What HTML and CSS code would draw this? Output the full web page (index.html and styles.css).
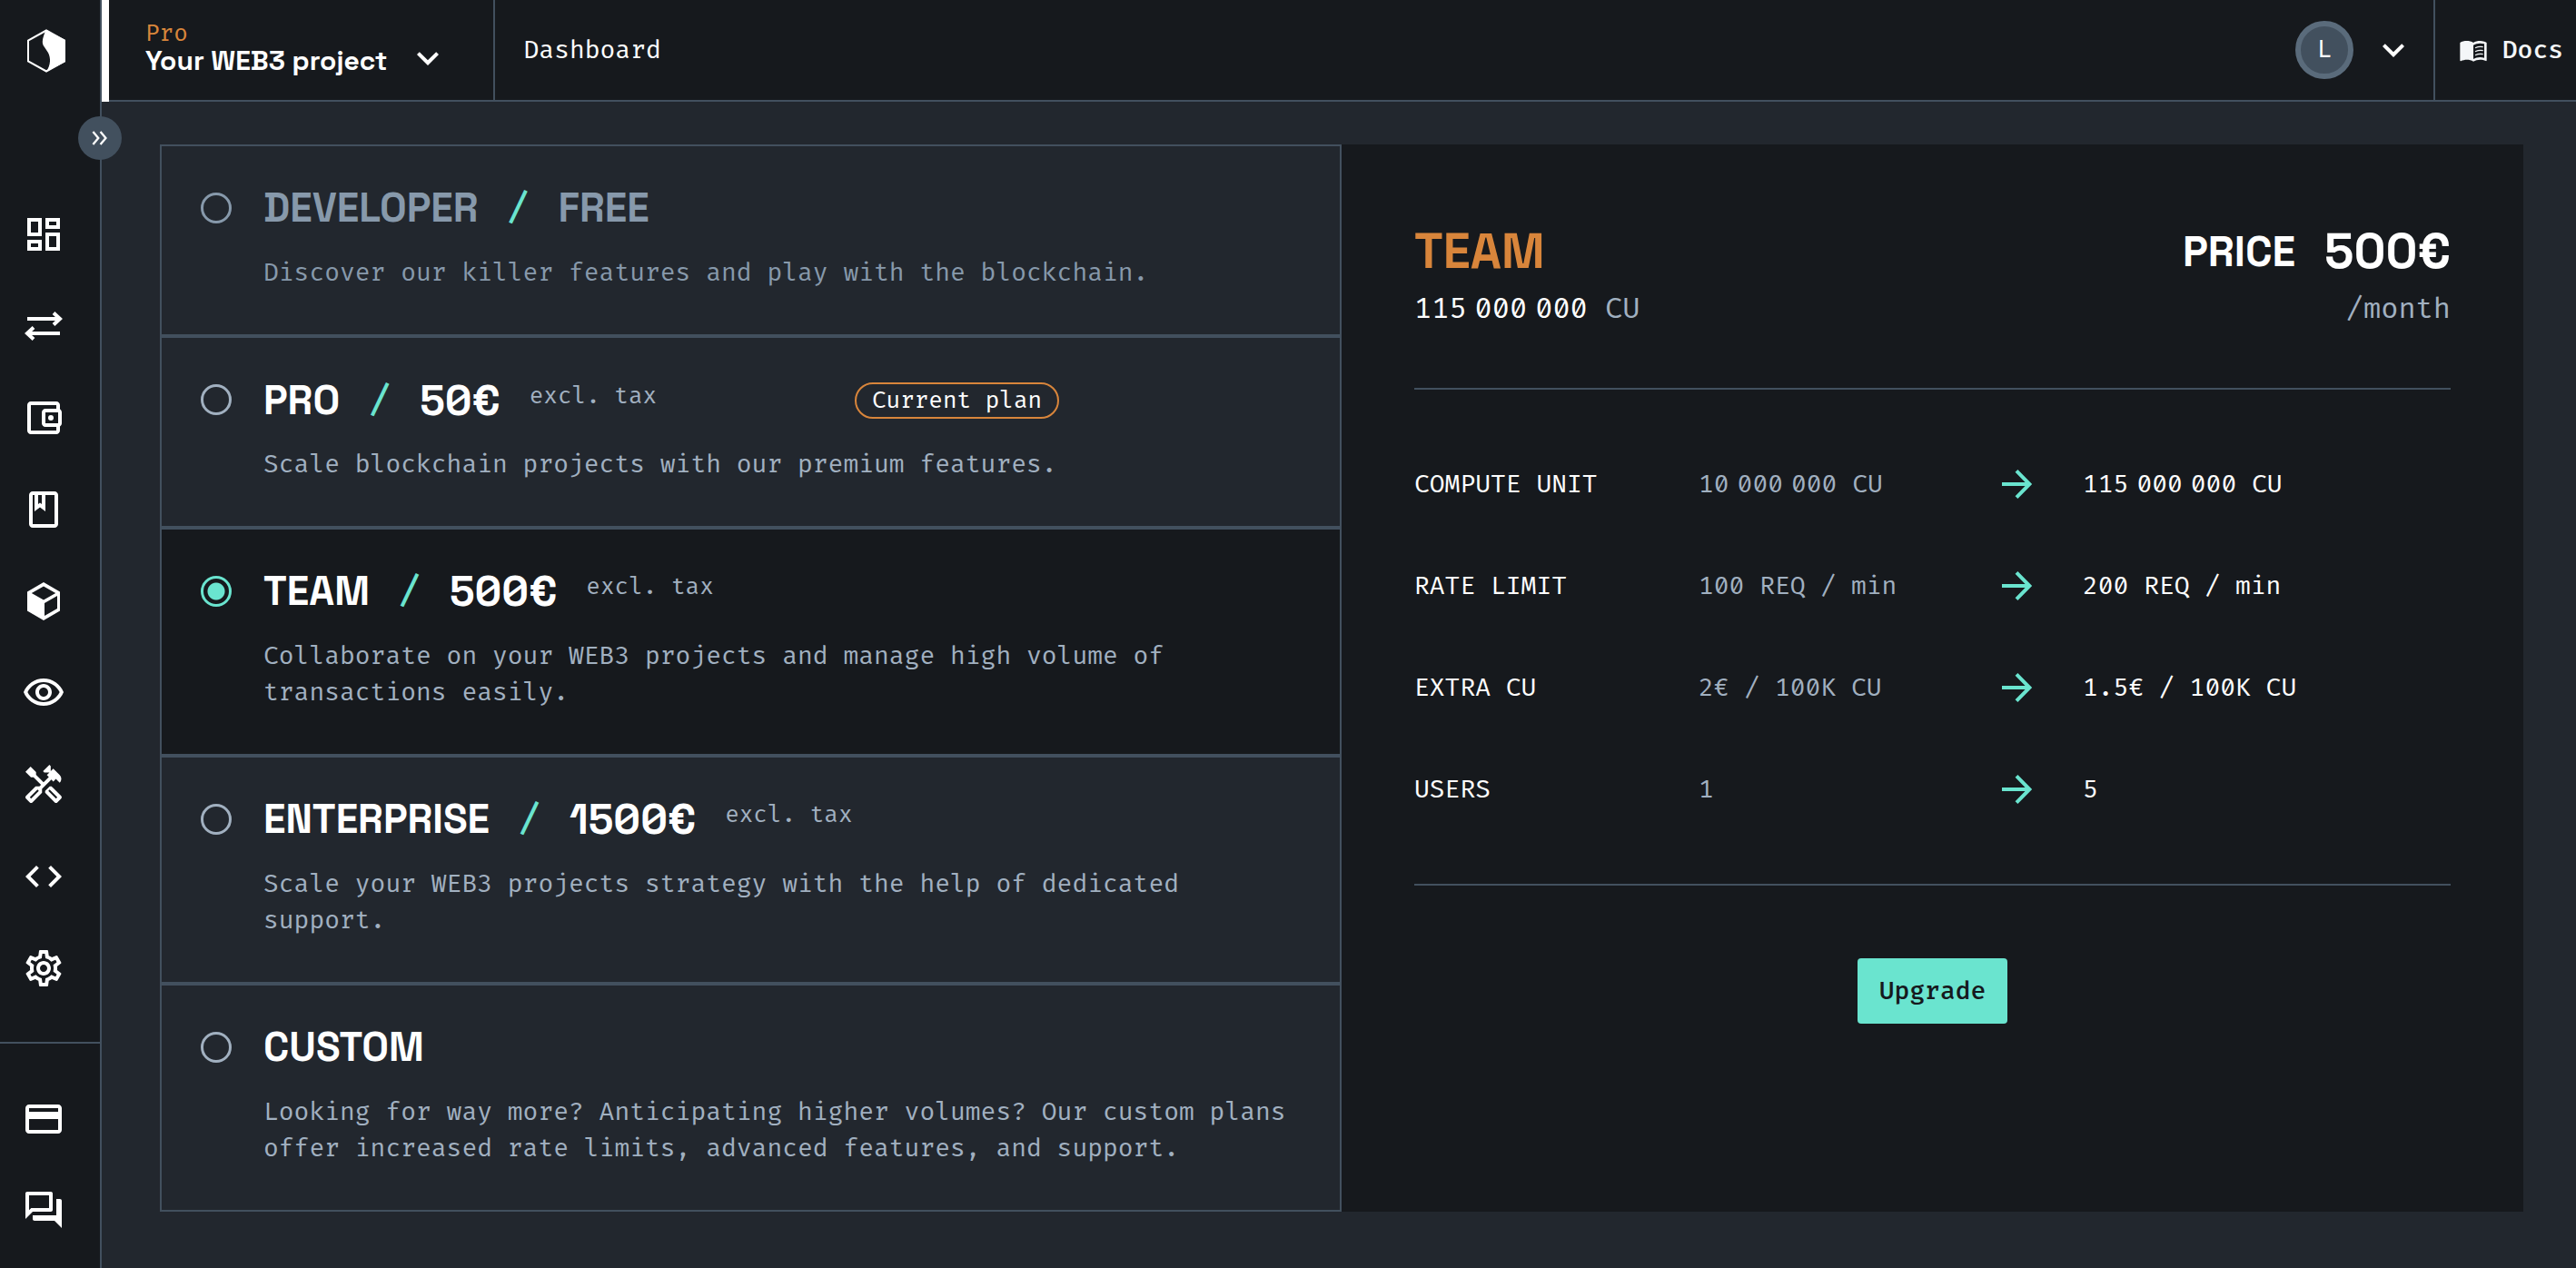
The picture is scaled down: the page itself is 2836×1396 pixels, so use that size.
FILE: index.html
```html
<!DOCTYPE html>
<html lang="en">
<head>
<meta charset="utf-8">
<title>Dashboard</title>
<link rel="stylesheet" href="styles.css">
</head>
<body>
<div class="app">
  <aside class="sidebar">
    <a class="logo" href="#" aria-label="Home">
      <svg viewBox="0 0 44 48"><path d="M22 1.500L2 12.500v23L22 46.500l20-11v-23z" fill="none" stroke="currentColor" stroke-width="2"/><path d="M21 1l22 11v24L22 47c5-8 5-15 2-21-4-7-7-8-6-14 .5-4 3-9 3-11z"/></svg>
    </a>
    <nav class="side-nav" aria-label="Main">
      <a href="#" aria-label="Dashboard"><svg viewBox="0 0 24 24"><path d="M19 5v2h-4V5h4M9 5v6H5V5h4m10 8v6h-4v-6h4M9 17v2H5v-2h4M21 3h-8v6h8V3zM11 3H3v10h8V3zm10 8h-8v10h8V11zm-10 4H3v6h8v-6z"/></svg></a>
      <a href="#" aria-label="Requests"><svg class="line" viewBox="0 0 24 24"><path d="M3 8h18M17.500 4.800L21 8l-3.500 3.200M21 16H3M6.500 12.800L3 16l3.500 3.200"/></svg></a>
      <a href="#" aria-label="Wallet"><svg viewBox="0 0 24 24"><path d="M21 7.280V5c0-1.100-.9-2-2-2H5c-1.110 0-2 .9-2 2v14c0 1.100.89 2 2 2h14c1.100 0 2-.9 2-2v-2.280c.59-.35 1-.98 1-1.720V9c0-.74-.41-1.370-1-1.720zM20 9v6h-7V9h7zM5 19V5h14v2h-6c-1.100 0-2 .9-2 2v6c0 1.100.9 2 2 2h6v2H5z"/><circle cx="16" cy="12" r="1.500"/></svg></a>
      <a href="#" aria-label="Address book"><svg viewBox="0 0 24 24"><path d="M18 2H6c-1.100 0-2 .9-2 2v16c0 1.100.9 2 2 2h12c1.100 0 2-.9 2-2V4c0-1.100-.9-2-2-2zM9 4h2v5l-1-.75L9 9V4zm9 16H6V4h1v9l3-2.250L13 13V4h5v16z"/></svg></a>
      <a href="#" aria-label="Nodes"><svg viewBox="0 0 24 24"><path fill-rule="evenodd" d="M12 1.500l9 5.200v10.600l-9 5.200-9-5.200V6.700zM5.400 7.500L12 11.300l6.600-3.800L12 3.700zM19.500 9l-7 4v7l7-4z"/></svg></a>
      <a href="#" aria-label="Explorer"><svg viewBox="0 0 24 24"><path d="M12 6c3.790 0 7.170 2.130 8.820 5.500C19.170 14.870 15.790 17 12 17s-7.170-2.130-8.820-5.500C4.830 8.130 8.210 6 12 6m0-2C7 4 2.730 7.110 1 11.500 2.730 15.890 7 19 12 19s9.270-3.110 11-7.500C21.270 7.110 17 4 12 4zm0 5c1.380 0 2.500 1.120 2.500 2.500S13.380 14 12 14s-2.500-1.120-2.500-2.500S10.620 9 12 9m0-2c-2.480 0-4.500 2.020-4.500 4.500S9.520 16 12 16s4.500-2.020 4.500-4.500S14.480 7 12 7z"/></svg></a>
      <a href="#" aria-label="Tools"><svg viewBox="0 0 24 24"><path d="m21.670 18.170-5.300-5.300h-.99l-2.540 2.540v.99l5.300 5.300c.39.39 1.020.39 1.410 0l2.120-2.120a.996.996 0 0 0 0-1.410zm-2.830 1.420-4.240-4.240.71-.71 4.240 4.240-.71.71z"/><path d="m17.340 10.190 1.410-1.410 2.120 2.120a3 3 0 0 0 0-4.240l-3.540-3.540-1.410 1.410V1.710L15.220 1l-3.540 3.540.71.71h2.830l-1.410 1.410 1.060 1.060-2.890 2.890-4.130-4.130V5.060L4.830 2.040 2 4.870 5.030 7.900h1.410l4.130 4.130-.85.85H7.600l-5.300 5.300c-.39.39-.39 1.020 0 1.410l2.120 2.120c.39.39 1.020.39 1.410 0l5.300-5.300v-2.120l5.150-5.150 1.060 1.050zm-7.980 5.150-4.240 4.240-.71-.71 4.240-4.240.71.71z"/></svg></a>
      <a href="#" aria-label="Code"><svg viewBox="0 0 24 24"><path d="M9.400 16.600 4.800 12l4.600-4.600L8 6l-6 6 6 6 1.400-1.400zm5.200 0 4.600-4.600-4.600-4.600L16 6l6 6-6 6-1.400-1.400z"/></svg></a>
      <a href="#" aria-label="Settings"><svg viewBox="0 0 24 24"><path d="M19.430 12.980c.04-.32.07-.64.07-.98 0-.34-.03-.66-.07-.98l2.110-1.650c.19-.15.24-.42.12-.64l-2-3.460c-.09-.16-.26-.25-.44-.25-.06 0-.12.01-.17.03l-2.490 1c-.52-.4-1.080-.73-1.690-.98l-.38-2.650C14.460 2.180 14.250 2 14 2h-4c-.25 0-.46.18-.49.42l-.38 2.650c-.61.25-1.170.59-1.690.98l-2.490-1c-.06-.02-.12-.03-.18-.03-.17 0-.34.09-.43.25l-2 3.460c-.13.22-.07.49.12.64l2.110 1.650c-.04.32-.07.65-.07.98 0 .33.03.66.07.98l-2.110 1.650c-.19.15-.24.42-.12.64l2 3.460c.09.16.26.25.44.25.06 0 .12-.01.17-.03l2.490-1c.52.4 1.080.73 1.690.98l.38 2.650c.03.24.24.42.49.42h4c.25 0 .46-.18.49-.42l.38-2.650c.61-.25 1.170-.59 1.690-.98l2.490 1c.06.02.12.03.18.03.17 0 .34-.09.43-.25l2-3.460c.12-.22.07-.49-.12-.64l-2.110-1.650zm-1.980-1.710c.04.31.05.52.05.73 0 .21-.02.43-.05.73l-.14 1.130.89.7 1.080.84-.7 1.210-1.270-.51-1.040-.42-.9.68c-.43.32-.84.56-1.250.73l-1.060.43-.16 1.130-.2 1.350h-1.400l-.19-1.350-.16-1.130-1.060-.43c-.43-.18-.83-.41-1.230-.71l-.91-.7-1.060.43-1.270.51-.7-1.210 1.080-.84.89-.7-.14-1.130c-.03-.31-.05-.54-.05-.74s.02-.43.05-.73l.14-1.130-.89-.7-1.080-.84.7-1.210 1.270.51 1.040.42.9-.68c.43-.32.84-.56 1.250-.73l1.060-.43.16-1.130.2-1.350h1.390l.19 1.350.16 1.130 1.060.43c.43.18.83.41 1.230.71l.91.7 1.060-.43 1.270-.51.7 1.210-1.070.85-.89.7.14 1.130zM12 8c-2.210 0-4 1.790-4 4s1.790 4 4 4 4-1.790 4-4-1.790-4-4-4zm0 6c-1.100 0-2-.9-2-2s.9-2 2-2 2 .9 2 2-.9 2-2 2z"/></svg></a>
    </nav>
    <nav class="side-nav side-foot" aria-label="Account">
      <a href="#" aria-label="Billing"><svg viewBox="0 0 24 24"><path d="M20 4H4c-1.110 0-1.990.89-1.990 2L2 18c0 1.110.89 2 2 2h16c1.110 0 2-.89 2-2V6c0-1.110-.89-2-2-2zm0 14H4v-6h16v6zm0-10H4V6h16v2z"/></svg></a>
      <a href="#" aria-label="Support"><svg viewBox="0 0 24 24"><path d="M15 4v7H5.170L4 12.170V4h11m1-2H3c-.55 0-1 .45-1 1v14l4-4h10c.55 0 1-.45 1-1V3c0-.55-.45-1-1-1zm5 4h-2v9H6v2c0 .55.45 1 1 1h11l4 4V7c0-.55-.45-1-1-1z"/></svg></a>
    </nav>
    <button class="toggle" type="button" aria-label="Expand menu"><svg class="line" viewBox="0 0 24 24"><path d="M5.500 6l5 6-5 6M12.500 6l5 6-5 6"/></svg></button>
  </aside>

  <div class="page">
    <header class="topbar">
      <button class="project" type="button">
        <span class="project-text"><span class="project-plan">Pro</span><span class="project-name">Your WEB3 project</span></span>
        <svg class="chevron" viewBox="0 0 24 24"><path d="M16.590 8.590 12 13.170 7.410 8.590 6 10l6 6 6-6z"/></svg>
      </button>
      <h1 class="title">Dashboard</h1>
      <button class="account" type="button" aria-label="Account">
        <span class="avatar">L</span>
        <svg class="chevron" viewBox="0 0 24 24"><path d="M16.590 8.590 12 13.170 7.410 8.590 6 10l6 6 6-6z"/></svg>
      </button>
      <a class="docs" href="#">
        <svg viewBox="0 0 24 24"><path d="M21 5c-1.110-.35-2.330-.5-3.500-.5-1.950 0-4.050.4-5.500 1.500-1.450-1.100-3.550-1.500-5.500-1.500S2.450 4.900 1 6v14.650c0 .25.25.5.5.5.1 0 .15-.05.25-.05C3.100 20.450 5.050 20 6.500 20c1.950 0 4.050.4 5.500 1.500 1.350-.85 3.800-1.500 5.500-1.500 1.650 0 3.350.3 4.750 1.050.1.050.15.050.25.050.25 0 .5-.25.5-.5V6c-.6-.45-1.250-.75-2-1zm0 13.500c-1.100-.35-2.300-.5-3.500-.5-1.700 0-4.150.65-5.500 1.500V8c1.350-.85 3.800-1.500 5.500-1.500 1.200 0 2.400.15 3.500.5v11.500z"/><path class="book-lines" d="M13.500 10.300q3.500-1.600 6.500-.8M13.500 13.300q3.500-1.600 6.500-.8M13.500 16.300q3.500-1.600 6.500-.8"/></svg>
        Docs
      </a>
    </header>

    <main class="plans">
      <form class="plan-list">
        <label class="plan plan-muted">
          <input type="radio" name="plan">
          <span class="plan-body">
            <span class="plan-head"><span class="plan-title">DEVELOPER <i class="slash">/</i> FREE</span></span>
            <span class="plan-desc">Discover our killer features and play with the blockchain.</span>
          </span>
        </label>
        <label class="plan">
          <input type="radio" name="plan">
          <span class="plan-body">
            <span class="plan-head"><span class="plan-title">PRO <i class="slash">/</i> <b class="amount">50€</b> <small class="tax">excl. tax</small></span><span class="badge">Current plan</span></span>
            <span class="plan-desc">Scale blockchain projects with our premium features.</span>
          </span>
        </label>
        <label class="plan">
          <input type="radio" name="plan" checked>
          <span class="plan-body">
            <span class="plan-head"><span class="plan-title">TEAM <i class="slash">/</i> <b class="amount">500€</b> <small class="tax">excl. tax</small></span></span>
            <span class="plan-desc">Collaborate on your WEB3 projects and manage high volume of transactions easily.</span>
          </span>
        </label>
        <label class="plan">
          <input type="radio" name="plan">
          <span class="plan-body">
            <span class="plan-head"><span class="plan-title">ENTERPRISE <i class="slash">/</i> <b class="amount">1500€</b> <small class="tax">excl. tax</small></span></span>
            <span class="plan-desc">Scale your WEB3 projects strategy with the help of dedicated support.</span>
          </span>
        </label>
        <label class="plan">
          <input type="radio" name="plan">
          <span class="plan-body">
            <span class="plan-head"><span class="plan-title">CUSTOM</span></span>
            <span class="plan-desc">Looking for way more? Anticipating higher volumes? Our custom plans offer increased rate limits, advanced features, and support.</span>
          </span>
        </label>
      </form>

      <section class="summary">
        <div class="summary-head">
          <div>
            <h2 class="summary-name">TEAM</h2>
            <p class="summary-sub"><span class="units"><span>115</span><span>000</span><span>000</span></span> <span class="dim">CU</span></p>
          </div>
          <div class="summary-price">
            <p class="price"><span class="price-label">PRICE</span><span class="amount">500€</span></p>
            <p class="summary-sub dim">/month</p>
          </div>
        </div>
        <table class="compare">
          <colgroup><col class="c-label"><col class="c-now"><col class="c-arrow"><col class="c-next"></colgroup>
          <tr><th scope="row">COMPUTE UNIT</th><td class="dim"><span class="units"><span>10</span><span>000</span><span>000</span></span> CU</td><td><svg class="arrow line" viewBox="0 0 24 24"><path d="M4 12h15M12 4.700l7.200 7.300L12 19.300"/></svg></td><td><span class="units"><span>115</span><span>000</span><span>000</span></span> CU</td></tr>
          <tr><th scope="row">RATE LIMIT</th><td class="dim">100 REQ / min</td><td><svg class="arrow line" viewBox="0 0 24 24"><path d="M4 12h15M12 4.700l7.200 7.300L12 19.300"/></svg></td><td>200 REQ / min</td></tr>
          <tr><th scope="row">EXTRA CU</th><td class="dim">2€ / 100K CU</td><td><svg class="arrow line" viewBox="0 0 24 24"><path d="M4 12h15M12 4.700l7.200 7.300L12 19.300"/></svg></td><td>1.5€ / 100K CU</td></tr>
          <tr><th scope="row">USERS</th><td class="dim">1</td><td><svg class="arrow line" viewBox="0 0 24 24"><path d="M4 12h15M12 4.700l7.200 7.300L12 19.300"/></svg></td><td>5</td></tr>
        </table>
        <button class="upgrade" type="button">Upgrade</button>
      </section>
    </main>
  </div>
</div>
</body>
</html>
```
FILE: styles.css
```css
:root {
  --bg: #22272e;
  --dark: #16191d;
  --line: #42505e;
  --white: #ffffff;
  --text: #a1b0c0;
  --muted: #8799ab;
  --teal: #6ae4cf;
  --orange: #d8853b;
  --mono: "Fira Mono", "Fira Code", "Liberation Mono", monospace;
  --display: "Space Grotesk", "Inter", "Liberation Sans", sans-serif;
}

* { box-sizing: border-box; }

body {
  margin: 0;
  background: var(--bg);
  color: var(--white);
  font: 28px/40px var(--mono);
  font-feature-settings: "zero";
}

h1, h2, p { margin: 0; font-weight: 400; }
a { color: inherit; text-decoration: none; }
button { border: 0; background: none; color: inherit; font: inherit; cursor: pointer; }
svg { display: block; fill: currentColor; }
.line { fill: none; stroke: currentColor; stroke-width: 2; }

.app { display: flex; min-height: 100vh; }

/* Sidebar */
.sidebar {
  position: relative;
  flex: none;
  width: 112px;
  border-right: 2px solid var(--line);
  background: var(--dark);
}
.logo { display: flex; padding: 32px 0 0 29px; height: 207px; }
.logo svg { width: 44px; height: 48px; }
.side-nav { display: grid; grid-auto-rows: 101px; }
.side-nav a { display: flex; align-items: center; padding-left: 24px; }
.side-nav svg { width: 48px; height: 48px; }
.side-foot {
  margin-top: 31px;
  padding-top: 33px;
  border-top: 2px solid var(--line);
  grid-auto-rows: 100px;
}
.toggle {
  position: absolute;
  top: 128px;
  right: -24px;
  width: 48px;
  height: 48px;
  padding: 10px;
  border-radius: 50%;
  background: var(--line);
}
.toggle svg { width: 28px; height: 28px; }

/* Top bar */
.page { flex: 1; min-width: 0; }
.topbar {
  display: flex;
  height: 112px;
  border-bottom: 2px solid var(--line);
  background: var(--dark);
}
.project {
  display: flex;
  align-items: center;
  gap: 20px;
  margin-bottom: -2px;
  padding: 0 48px 0 40px;
  border-left: 8px solid var(--white);
  text-align: left;
  white-space: nowrap;
}
.project-text { display: grid; gap: 2px; padding-bottom: 9px; line-height: 28px; }
.project-plan { color: var(--orange); font-size: 26px; }
.project-name { font: 700 30px/28px var(--display); }
.chevron { width: 48px; height: 48px; }
.project .chevron { margin-top: 16px; }
.title {
  flex: 1;
  padding: 35px 32px;
  border-left: 2px solid var(--line);
  font-size: 28px;
}
.account { display: flex; align-items: center; gap: 20px; padding: 0 20px; }
.avatar {
  width: 64px;
  height: 64px;
  border: 6px solid #5a6b7b;
  border-radius: 50%;
  background: var(--line);
  font: 28px/50px var(--mono);
}
.docs {
  display: flex;
  align-items: center;
  gap: 16px;
  padding: 0 14px 0 26px;
  border-left: 2px solid var(--line);
  color: #f4f6f8;
  font-weight: 500;
}
.docs svg { width: 32px; height: 32px; }
.book-lines { fill: none; stroke: currentColor; stroke-width: 1; }

/* Plans */
.plans {
  display: grid;
  grid-template-columns: 1fr 1fr;
  padding: 47px 58px 63px 64px;
}
.plan {
  display: flex;
  gap: 35px;
  padding: 49px 43px 38px;
  border: 2px solid var(--line);
  cursor: pointer;
}
.plan-list { min-width: 0; }
.plan:has(:checked) { background: var(--dark); }
.plan input {
  flex: none;
  appearance: none;
  width: 34px;
  height: 34px;
  margin: 2px 0 0;
  border: 3px solid var(--text);
  border-radius: 50%;
}
.plan input:checked {
  border-color: var(--teal);
  background: radial-gradient(circle, var(--teal) 9px, transparent 10px);
}
.plan-body { flex: 1; min-width: 0; }
.plan-head {
  display: grid;
  grid-template-columns: 57% auto;
  align-items: center;
  justify-content: start;
  height: 38px;
}
.plan-title {
  display: flex;
  gap: 32px;
  font: 700 44px/38px var(--display);
  white-space: nowrap;
}
.amount { font: 700 46px/38px var(--display); font-feature-settings: "zero"; }
.slash { color: var(--teal); font: 500 40px/38px var(--mono); }
.tax { color: var(--text); font: 26px/28px var(--mono); }
.badge {
  padding: 0 17px;
  border: 2px solid var(--orange);
  border-radius: 20px;
  font-size: 26px;
  line-height: 36px;
}
.plan-desc { display: block; margin-top: 32px; min-height: 50px; padding-bottom: 10px; color: var(--text); }
.plan-muted, .plan-muted .plan-desc { color: var(--muted); }
.plan-muted input { border-color: var(--muted); }

/* Selected plan summary */
.summary { min-width: 0; padding: 80px; background: var(--dark); }
.summary-head {
  display: flex;
  justify-content: space-between;
  height: 188px;
}
.summary-name { color: var(--orange); font: 700 54px/76px var(--display); }
.summary-sub { font-size: 32px; line-height: 48px; }
.summary-price { text-align: right; }
.price { display: flex; gap: 32px; line-height: 76px; }
.price-label { font: 700 46px/76px var(--display); }
.price .amount { font: 700 54px/76px var(--display); }
.dim { color: var(--text); }
.units { display: inline-flex; gap: 9px; }
.compare {
  width: 100%;
  height: 548px;
  padding: 48px 0;
  border-top: 2px solid var(--line);
  border-bottom: 2px solid var(--line);
  border-spacing: 0;
  table-layout: fixed;
  text-align: left;
}
.compare th, .compare td { height: 112px; padding: 0; font-weight: 400; }
.c-label { width: 313px; }
.c-now { width: 326px; }
.c-arrow { width: 97px; }
.arrow { width: 48px; height: 48px; color: var(--teal); }
.upgrade {
  display: block;
  height: 72px;
  margin: 80px auto 0;
  padding: 0 24px;
  border-radius: 4px;
  background: var(--teal);
  color: var(--dark);
  font-weight: 500;
}
```
